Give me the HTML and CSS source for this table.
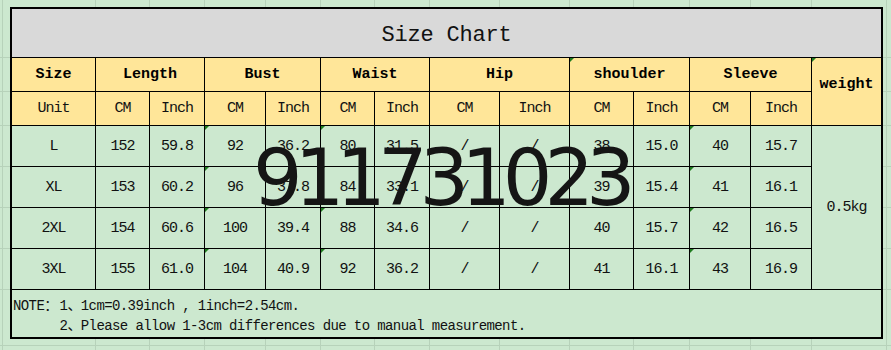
FILE: index.html
```html
<!DOCTYPE html>
<html>
<head>
<meta charset="utf-8">
<link rel="stylesheet" href="styles.css">
</head>
<body>
<div class="sheet">
  <div class="chart">
    <div class="cell title">Size Chart</div>

    <div class="cell head">Size</div>
    <div class="cell head span2">Length</div>
    <div class="cell head span2">Bust</div>
    <div class="cell head span2">Waist</div>
    <div class="cell head span2">Hip</div>
    <div class="cell head span2 tri">shoulder</div>
    <div class="cell head span2">Sleeve</div>
    <div class="cell head weight tri">weight</div>

    <div class="cell unit">Unit</div>
    <div class="cell unit">CM</div><div class="cell unit">Inch</div>
    <div class="cell unit">CM</div><div class="cell unit">Inch</div>
    <div class="cell unit">CM</div><div class="cell unit">Inch</div>
    <div class="cell unit">CM</div><div class="cell unit">Inch</div>
    <div class="cell unit">CM</div><div class="cell unit">Inch</div>
    <div class="cell unit">CM</div><div class="cell unit">Inch</div>

    <div class="cell">L</div>
    <div class="cell">152</div><div class="cell">59.8</div>
    <div class="cell tri">92</div><div class="cell">36.2</div>
    <div class="cell tri">80</div><div class="cell">31.5</div>
    <div class="cell">/</div><div class="cell">/</div>
    <div class="cell">38</div><div class="cell">15.0</div>
    <div class="cell tri">40</div><div class="cell">15.7</div>
    <div class="cell kg">0.5kg</div>

    <div class="cell">XL</div>
    <div class="cell">153</div><div class="cell">60.2</div>
    <div class="cell tri">96</div><div class="cell">37.8</div>
    <div class="cell tri">84</div><div class="cell">33.1</div>
    <div class="cell">/</div><div class="cell">/</div>
    <div class="cell">39</div><div class="cell">15.4</div>
    <div class="cell tri">41</div><div class="cell">16.1</div>

    <div class="cell">2XL</div>
    <div class="cell">154</div><div class="cell">60.6</div>
    <div class="cell tri">100</div><div class="cell">39.4</div>
    <div class="cell tri">88</div><div class="cell">34.6</div>
    <div class="cell">/</div><div class="cell">/</div>
    <div class="cell">40</div><div class="cell">15.7</div>
    <div class="cell tri">42</div><div class="cell">16.5</div>

    <div class="cell">3XL</div>
    <div class="cell">155</div><div class="cell">61.0</div>
    <div class="cell tri">104</div><div class="cell">40.9</div>
    <div class="cell tri">92</div><div class="cell">36.2</div>
    <div class="cell">/</div><div class="cell">/</div>
    <div class="cell">41</div><div class="cell">16.1</div>
    <div class="cell tri">43</div><div class="cell">16.9</div>

    <div class="cell note">
      <span class="note-label">NOTE：</span>
      <span class="note-lines">
        <span>1、1cm=0.39inch , 1inch=2.54cm.</span>
        <span>2、Please allow 1-3cm differences due to manual measurement.</span>
      </span>
    </div>
  </div>
  <div class="watermark">911731023</div>
</div>
</body>
</html>
```

FILE: styles.css
```css
html, body {
  margin: 0;
  padding: 0;
}

body {
  width: 891px;
  height: 350px;
  overflow: hidden;
  font-family: "Liberation Mono", "Noto Sans CJK SC", monospace;
  color: #111;
  background-color: #cce8cf;
  background-image:
    linear-gradient(#b7d2ba, #b7d2ba), linear-gradient(#b7d2ba, #b7d2ba),
    linear-gradient(#b7d2ba, #b7d2ba), linear-gradient(#b7d2ba, #b7d2ba),
    linear-gradient(#b7d2ba, #b7d2ba), linear-gradient(#b7d2ba, #b7d2ba),
    linear-gradient(#b7d2ba, #b7d2ba), linear-gradient(#b7d2ba, #b7d2ba),
    linear-gradient(#b7d2ba, #b7d2ba), linear-gradient(#b7d2ba, #b7d2ba),
    linear-gradient(#b7d2ba, #b7d2ba), linear-gradient(#b7d2ba, #b7d2ba),
    linear-gradient(#b7d2ba, #b7d2ba), linear-gradient(#b7d2ba, #b7d2ba),
    linear-gradient(#b7d2ba, #b7d2ba), linear-gradient(#b7d2ba, #b7d2ba),
    linear-gradient(#b7d2ba, #b7d2ba), linear-gradient(#b7d2ba, #b7d2ba),
    linear-gradient(#b7d2ba, #b7d2ba), linear-gradient(#b7d2ba, #b7d2ba),
    linear-gradient(#b7d2ba, #b7d2ba), linear-gradient(#b7d2ba, #b7d2ba),
    linear-gradient(#b7d2ba, #b7d2ba);
  background-repeat: no-repeat;
  background-size:
    1px 100%, 1px 100%, 1px 100%, 1px 100%, 1px 100%, 1px 100%, 1px 100%,
    1px 100%, 1px 100%, 1px 100%, 1px 100%, 1px 100%, 1px 100%, 1px 100%,
    1px 100%,
    100% 1px, 100% 1px, 100% 1px, 100% 1px, 100% 1px, 100% 1px, 100% 1px,
    100% 1px;
  background-position:
    2px 0, 95px 0, 149px 0, 204px 0, 265px 0, 320px 0, 374px 0,
    429px 0, 499px 0, 569px 0, 633px 0, 689px 0, 750px 0, 811px 0,
    886px 0,
    0 57px, 0 91px, 0 125px, 0 166px, 0 207px, 0 248px, 0 289px,
    0 345px;
}

.sheet {
  position: relative;
  padding: 7px 0 0 10px;
}

.chart {
  display: grid;
  width: max-content;
  grid-template-columns: 83px 53px 54px 60px 54px 53px 54px 69px 69px 63px 55px 60px 60px 69px;
  grid-template-rows: 48px 33px 33px 40px 40px 40px 40px 47px;
  gap: 1px;
  background: #000;
  border: 2px solid #000;
}

.cell {
  position: relative;
  display: flex;
  align-items: center;
  justify-content: center;
  background: #cce8cf;
  font-size: 15px;
  letter-spacing: -1px;
  white-space: nowrap;
}

.tri::before {
  content: "";
  position: absolute;
  left: 0;
  top: 0;
  border-top: 4px solid #1f7d1f;
  border-right: 4px solid transparent;
}

.title {
  grid-column: 1 / span 14;
  background: #d9d9d9;
  font-size: 22px;
  letter-spacing: -0.2px;
  padding-top: 5px;
  box-sizing: border-box;
}

.head {
  background: #ffe699;
  font-weight: bold;
  font-size: 15px;
  letter-spacing: 0;
  color: #000;
}

.span2 {
  grid-column: span 2;
}

.weight {
  grid-column: 14;
  grid-row: 2 / span 2;
  padding-bottom: 14px;
}

.unit {
  background: #ffe699;
}

.kg {
  grid-column: 14;
  grid-row: 4 / span 4;
}

.note {
  grid-column: 1 / span 14;
  justify-content: flex-start;
  align-items: flex-start;
  padding: 6px 0 0 1px;
  line-height: 20px;
  font-size: 14px;
  letter-spacing: -0.6px;
}

.note-lines {
  display: flex;
  flex-direction: column;
  margin-left: 2px;
}

.watermark {
  position: absolute;
  left: 253px;
  top: 139px;
  font-family: "DejaVu Sans", sans-serif;
  font-size: 78px;
  line-height: 78px;
  letter-spacing: -8px;
  color: #151515;
}
```
